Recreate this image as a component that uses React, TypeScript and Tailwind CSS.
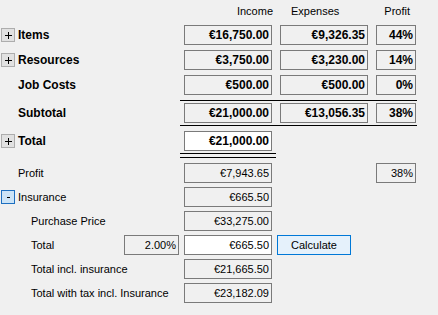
import React from "react";

const FONT = "font-['Liberation_Sans',Arial,sans-serif]";

interface BoxProps {
    value?: string;
    bold?: boolean;
    white?: boolean;
    className?: string;
}

function Box({ value, bold, white, className = "w-[88px]" }: BoxProps) {
    return (
        <div
            className={`${className} h-[20px] shrink-0 border border-[#7a7a7a] flex items-center justify-end pr-[2px] leading-none ${
                white ? "bg-white" : "bg-[#f0f0f0]"
            } ${bold ? "font-bold text-[12px]" : "text-[11px]"}`}
        >
            {value}
        </div>
    );
}

function Expander({ open }: { open?: boolean }) {
    return (
        <div
            className={`ml-[1px] mr-[3px] w-[14px] h-[14px] shrink-0 flex items-center justify-center border ${
                open ? "border-[#1d6fc0] bg-[#cce4f7]" : "border-[#adadad] bg-[#e1e1e1]"
            }`}
        >
            <svg width="7" height="7" viewBox="0 0 7 7" shapeRendering="crispEdges">
                <rect x="2" y="3" width="3" height="1" fill="#000" />
                {!open && <rect x="0" y="3" width="7" height="1" fill="#000" />}
                {!open && <rect x="3" y="0" width="1" height="7" fill="#000" />}
            </svg>
        </div>
    );
}

interface SumRowProps {
    label: string;
    expander?: boolean;
    values: [string, string, string];
    className?: string;
}

function SumRow({ label, expander, values, className = "" }: SumRowProps) {
    return (
        <div className={`flex h-[20px] items-center ${className}`}>
            <div className={`w-[184px] flex items-center font-bold text-[12px] ${expander ? "" : "pl-[18px]"}`}>
                {expander && <Expander />}
                <span>{label}</span>
            </div>
            <Box value={values[0]} bold />
            <Box value={values[1]} bold className="w-[88px] ml-[8px]" />
            <Box value={values[2]} bold className="w-[40px] ml-[8px]" />
        </div>
    );
}

function DetailRow({ label, value }: { label: string; value: string }) {
    return (
        <div className="flex h-[20px] items-center mt-[4px]">
            <div className="w-[184px] pl-[31px] text-[11px]">{label}</div>
            <Box value={value} />
        </div>
    );
}

export default function App() {
    return (
        <div className={`w-[438px] h-[315px] bg-[#f0f0f0] text-black overflow-hidden ${FONT}`}>
            {/* column headers */}
            <div className="flex h-[25px] pt-[5px] text-[11px] leading-[13px]">
                <div className="w-[184px]" />
                <div className="w-[89px] text-right">Income</div>
                <div className="w-[98px] pl-[18px]">Expenses</div>
                <div className="w-[39px] text-right">Profit</div>
            </div>

            <SumRow label="Items" expander values={["€16,750.00", "€9,326.35", "44%"]} />
            <SumRow label="Resources" expander values={["€3,750.00", "€3,230.00", "14%"]} className="mt-[5px]" />
            <SumRow label="Job Costs" values={["€500.00", "€500.00", "0%"]} className="mt-[5px]" />

            <div className="ml-[180px] w-[237px] h-px bg-black mt-[5px]" />
            <SumRow label="Subtotal" values={["€21,000.00", "€13,056.35", "38%"]} className="mt-[2px]" />
            <div className="ml-[180px] w-[237px] h-px bg-black mt-[2px]" />

            {/* Total */}
            <div className="flex h-[20px] items-center mt-[5px]">
                <div className="w-[184px] flex items-center font-bold text-[12px]">
                    <Expander />
                    <span>Total</span>
                </div>
                <Box value="€21,000.00" bold white />
            </div>
            <div className="ml-[180px] w-[96px] h-px bg-black mt-[2px]" />
            <div className="ml-[180px] w-[96px] h-px bg-black mt-[3px]" />

            {/* Profit */}
            <div className="flex h-[20px] items-center mt-[5px]">
                <div className="w-[184px] pl-[18px] text-[11px]">Profit</div>
                <Box value="€7,943.65" />
                <Box value="38%" className="w-[40px] ml-[104px]" />
            </div>

            {/* Insurance */}
            <div className="flex h-[20px] items-center mt-[4px]">
                <div className="w-[184px] flex items-center text-[11px]">
                    <Expander open />
                    <span>Insurance</span>
                </div>
                <Box value="€665.50" />
            </div>

            <DetailRow label="Purchase Price" value="€33,275.00" />

            <div className="flex h-[20px] items-center mt-[4px]">
                <div className="w-[124px] pl-[31px] text-[11px]">Total</div>
                <Box value="2.00%" className="w-[55px]" />
                <Box value="€665.50" white className="w-[88px] ml-[5px]" />
                <button
                    type="button"
                    className="ml-[5px] w-[74px] h-[20px] border border-[#0078d7] bg-[#e5f1fb] text-[11px] leading-none flex items-center justify-center"
                >
                    Calculate
                </button>
            </div>

            <DetailRow label="Total incl. insurance" value="€21,665.50" />
            <DetailRow label="Total with tax incl. Insurance" value="€23,182.09" />
        </div>
    );
}
